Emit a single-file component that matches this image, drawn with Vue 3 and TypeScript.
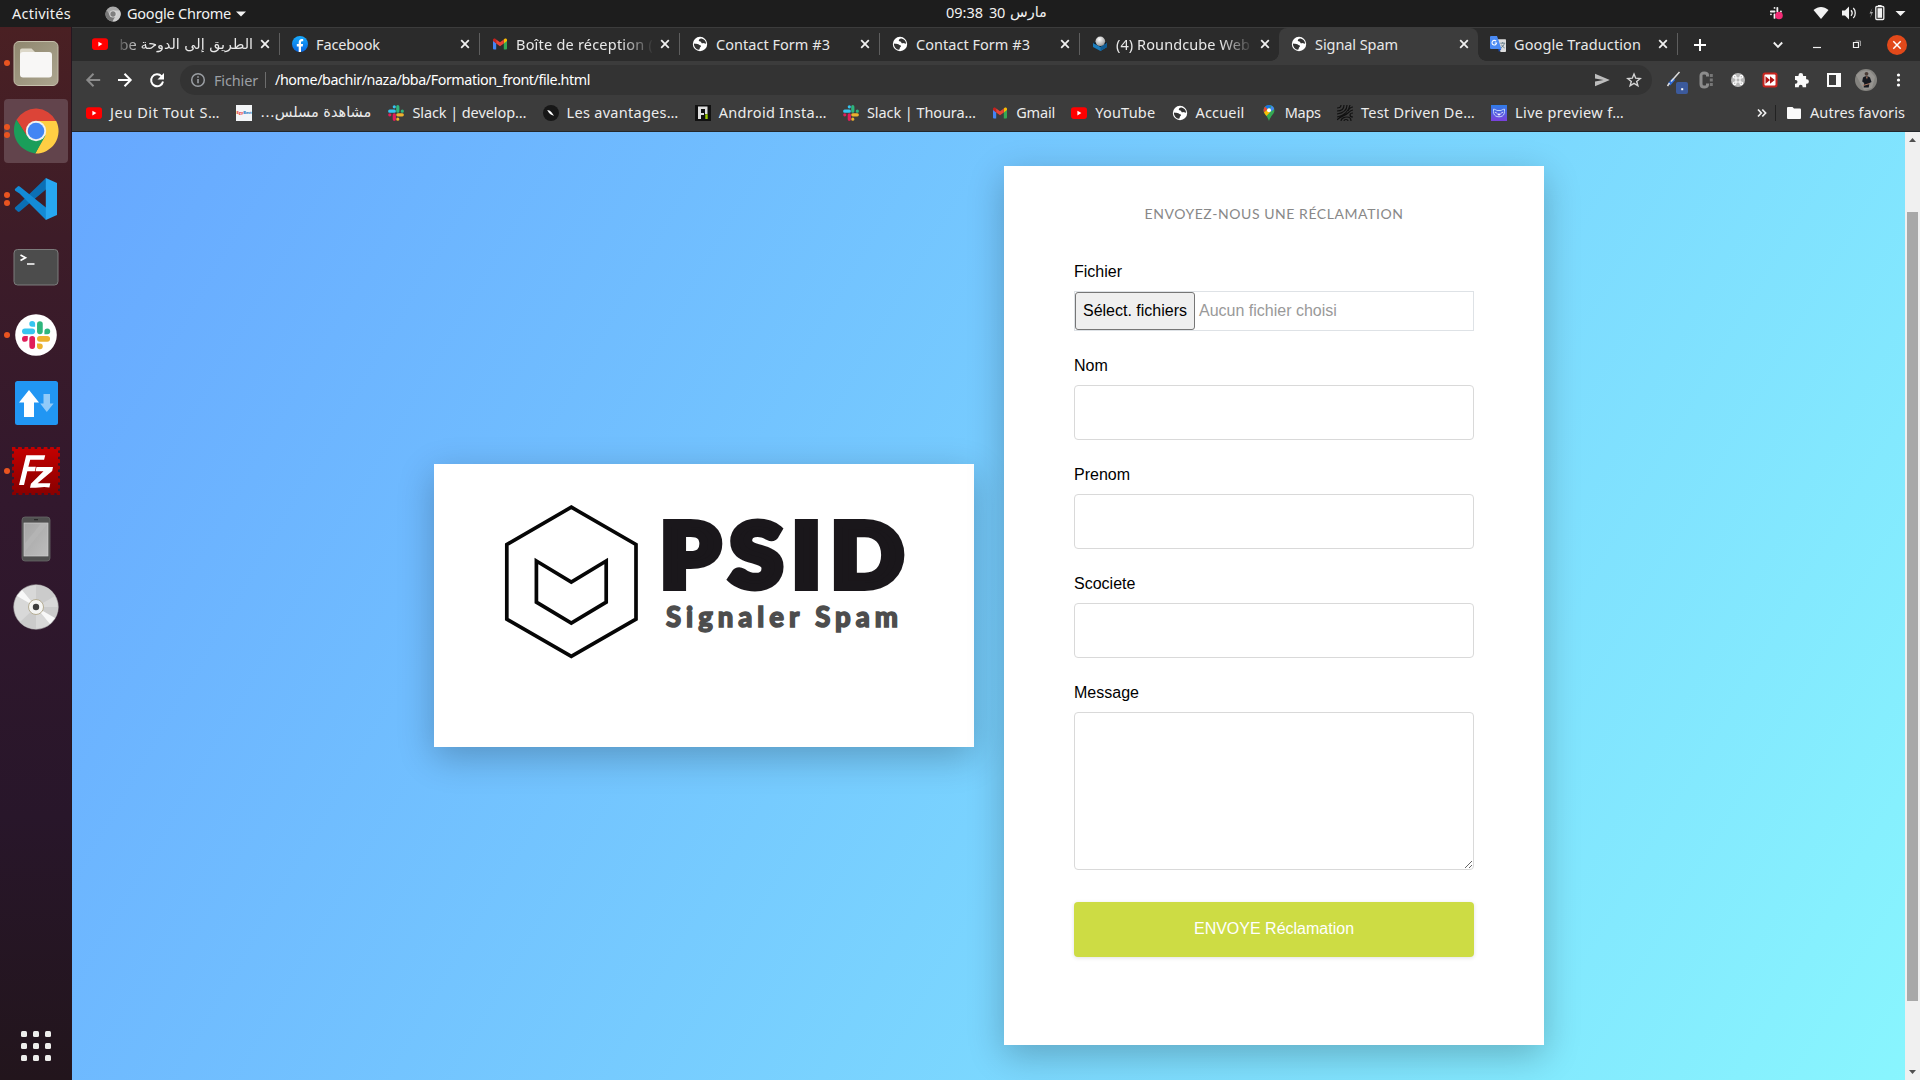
<script setup lang="ts">
import type { Directive } from 'vue'

interface Tab { icon: string; title: string; w: number; active?: boolean; fade?: boolean; rtl?: boolean; sep?: boolean }
interface Bookmark { icon: string; title: string; w: number; rtl?: boolean }
interface DockItem { icon: string; dots: number; active?: boolean }

const tabs: Tab[] = [
  { icon: 'youtube', title: 'الطريق إلى الدوحة', w: 115, rtl: true, fade: true, sep: true },
  { icon: 'facebook', title: 'Facebook', w: 64, sep: true },
  { icon: 'gmail', title: 'Boîte de réception (', w: 137, fade: true, sep: true },
  { icon: 'globe', title: 'Contact Form #3', w: 114, sep: true },
  { icon: 'globe', title: 'Contact Form #3', w: 114, sep: true },
  { icon: 'cube', title: '(4) Roundcube Web', w: 134, fade: true },
  { icon: 'globe', title: 'Signal Spam', w: 83, active: true },
  { icon: 'translate', title: 'Google Traduction', w: 127, sep: true },
]

const bookmarks: Bookmark[] = [
  { icon: 'youtube', title: 'Jeu Dit Tout S…', w: 110 },
  { icon: 'egy', title: 'مشاهدة مسلس…', w: 112, rtl: true },
  { icon: 'slack', title: 'Slack | develop…', w: 114 },
  { icon: 'pen', title: 'Les avantages…', w: 112 },
  { icon: 'android', title: 'Android Insta…', w: 108 },
  { icon: 'slack', title: 'Slack | Thoura…', w: 109 },
  { icon: 'gmail', title: 'Gmail', w: 39 },
  { icon: 'youtube', title: 'YouTube', w: 60 },
  { icon: 'globe', title: 'Accueil', w: 49 },
  { icon: 'maps', title: 'Maps', w: 36 },
  { icon: 'swirl', title: 'Test Driven De…', w: 114 },
  { icon: 'bear', title: 'Live preview f…', w: 109 },
]

const dock: DockItem[] = [
  { icon: 'd-files', dots: 1 },
  { icon: 'd-chrome', dots: 2, active: true },
  { icon: 'd-code', dots: 2 },
  { icon: 'd-term', dots: 0 },
  { icon: 'd-slack', dots: 1 },
  { icon: 'd-transfer', dots: 0 },
  { icon: 'd-fz', dots: 1 },
  { icon: 'd-phone', dots: 0 },
  { icon: 'd-disc', dots: 0 },
]

const fields = ['Nom', 'Prenom', 'Scociete']

/* Spreads the letters of a label so that it fills the given width. */
const vFit: Directive<HTMLElement, number> = {
  mounted(el, binding) {
    const n = (el.textContent || '').trim().length
    if (!binding.value || n < 2) return
    const natural = el.getBoundingClientRect().width
    el.style.letterSpacing = ((binding.value - natural) / n).toFixed(3) + 'px'
  },
}
</script>

<template>
  <div class="desktop">
    <svg class="defs" width="0" height="0" aria-hidden="true">
      <defs>
        <linearGradient id="gFiles" x1="0" y1="0" x2="1" y2="1"><stop offset="0" stop-color="#8f876f" /><stop offset="1" stop-color="#aca58f" /></linearGradient>
        <linearGradient id="gFz" x1="0" y1="0" x2="0" y2="1"><stop offset="0" stop-color="#c20000" /><stop offset="1" stop-color="#8a0000" /></linearGradient>
        <linearGradient id="gBear" x1="0" y1="0" x2="0" y2="1"><stop offset="0" stop-color="#2f7de8" /><stop offset="1" stop-color="#7a40dc" /></linearGradient>
        <linearGradient id="gFb" x1="0" y1="0" x2="0" y2="1"><stop offset="0" stop-color="#18acfe" /><stop offset="1" stop-color="#0866e0" /></linearGradient>
        <linearGradient id="gPhone" x1="0" y1="0" x2="1" y2="1"><stop offset="0" stop-color="#a5a5a5" /><stop offset="1" stop-color="#bdbdbd" /></linearGradient>
        <radialGradient id="gBall" cx=".4" cy=".3" r=".8"><stop offset="0" stop-color="#fff" /><stop offset="1" stop-color="#8b8b8b" /></radialGradient>
      </defs>
      <symbol id="youtube" viewBox="0 0 16 16"><rect y="2.3" width="16" height="11.6" rx="2.8" fill="#f00" /><path d="M6.4 5.7v4.8L10.4 8.1z" fill="#fff" /></symbol>
      <symbol id="facebook" viewBox="0 0 16 16"><circle cx="8" cy="8" r="8" fill="url(#gFb)" /><path d="M6.7 16v-5.6H4.8V8h1.9V6.5c0-2.2 1.2-3.4 3.1-3.4.6 0 1 .1 1.4.2v2h-1c-1 0-1.2.6-1.2 1.3V8h2.1l-.4 2.4H9V16z" fill="#fff" /></symbol>
      <symbol id="gmail" viewBox="0 0 16 16"><path d="M1 4.2v8.3c0 .6.4.9.9.9h2.3V7.2z" fill="#4285f4" /><path d="M15 4.2v8.3c0 .6-.4.9-.9.9h-2.3V7.2z" fill="#34a853" /><path d="M11.8 3.4v4l3.2-2.5V4c0-1.500-1.500-1.900-2.400-1.200z" fill="#fbbc04" /><path d="M1 4v.9l3.200 2.500v-4L3.400 2.800C2.500 2.100 1 2.500 1 4z" fill="#c5221f" /><path d="M4.200 3.400v4L8 10.200l3.800-2.800v-4L8 6.300z" fill="#ea4335" /></symbol>
      <symbol id="globe" viewBox="0 0 16 16"><circle cx="8" cy="8" r="7.200" fill="#fff" /><path d="M9.600 2.500C7 2.700 6.600 4 6.900 5c.9.500 2 .2 2.300 1.200.3 1.200 1.200 1.400 2.200.9 1 .1 1.300.9 2.700.5-.2-2.600-1.900-4.500-4.500-5.100z" fill="#333" /><path d="M1.900 7.500c1.600.3 3 .1 4.500.8 1 .5 1.200 1.100 2.300 1.300.8.400.2 1.300-.5 1.600-.7.500-.2 1.700-1.200 2.600-3-.3-5.200-3-5.100-6.300z" fill="#333" /></symbol>
      <symbol id="cube" viewBox="0 0 16 16"><path d="M1 7l7-3 7 3v4l-6.500 4L1 11z" fill="#1b7dbd" /><path d="M1 7l7.500 4L15 7l-6-4z" fill="#111a22" /><path d="M8.500 11l6.500-4v4l-6.500 4z" fill="#105b93" /><circle cx="8.300" cy="5.300" r="4.800" fill="url(#gBall)" /></symbol>
      <symbol id="translate" viewBox="0 0 16 16"><path d="M7 3.200h8c.6 0 1 .4 1 1V15c0 .5-.4 1-1 1H10.500z" fill="#dedede" /><path d="M10.300 7.200h4.900M12.700 6v1.200M14.300 7.400c-.5 2-1.700 3.300-3.300 4.300M11.500 8.700c.7 1.500 1.700 2.500 3.200 3.300" stroke="#607988" stroke-width=".9" fill="none" /><path d="M8.300 13h3l-2.400 3z" fill="#1a4fc0" /><path d="M1 0h6l4.500 13H1a1 1 0 0 1-1-1V1a1 1 0 0 1 1-1z" fill="#4a8af4" /><path d="M6.100 5.200A2.300 2.300 0 1 0 6.600 7H4.700" stroke="#fff" stroke-width="1.100" fill="none" /></symbol>
      <symbol id="slack" viewBox="0 0 16 16"><g stroke-width="3.200" stroke-linecap="round"><path d="M6.300 6.200H1.700M6.300 1.800v.01" stroke="#36c5f0" /><path d="M9.800 6.200V1.700M14.300 6.200h-.01" stroke="#2eb67d" /><path d="M9.800 9.800h4.500M9.800 14.200v.01" stroke="#ecb22e" /><path d="M6.300 9.800v4.500M1.800 9.800h.01" stroke="#e01e5a" /></g></symbol>
      <symbol id="pen" viewBox="0 0 16 16"><circle cx="8" cy="8" r="8" fill="#171717" /><path d="M4.200 4.900c2.900.2 4.200 1.700 6.900 5.800-3.200-.8-5.200-2.100-6.900-5.800z" fill="#fff" /></symbol>
      <symbol id="android" viewBox="0 0 16 16"><rect width="16" height="16" fill="#111" /><path d="M3 14V1.500h9.500V9H10V4H6v4h3v2H6v4z" fill="#dedede" /><path d="M10.300 9.200h2.400V14h-2.400z" fill="#9aca00" /></symbol>
      <symbol id="maps" viewBox="0 0 16 16"><path d="M8 0C5 0 2.600 2.300 2.600 5.300c0 4 4 5.500 5.400 10.700 1.400-5.200 5.400-6.700 5.400-10.700C13.400 2.300 11 0 8 0z" fill="#34a853" /><path d="M8 0C6.400 0 5 .7 4 1.800l2.600 2.500 4-3.700C9.800.2 8.900 0 8 0z" fill="#1a73e8" /><path d="M4 1.800C2.600 3.400 2.200 5.600 3 7.500l3.600-3.200z" fill="#ea4335" /><path d="M3 7.500c.6 1.400 1.600 2.400 2.500 3.600L9.600 6.500 6.600 4.300z" fill="#fbbc04" /><path d="M10.600.6L9.300 3.800l1 2.600L13.200 4A5.400 5.400 0 0 0 10.600.6z" fill="#4285f4" /><circle cx="8" cy="5.300" r="2" fill="#fff" /></symbol>
      <symbol id="swirl" viewBox="0 0 16 16"><g fill="none" stroke="#111" stroke-width="1.200"><path d="M0 3C3 3 4 2 4 0M0 6C5 6 7 4 7 0M0 9C7 8 10 5 10 0M0 12C7 11 12 6 13 0M0 15C3 11 8 11 11 8s4-3 5-3M4 16c0-3 4-4 6-4s4 1 4 4M7 16c0-2 4-2 4 0M16 8c-4 0-4 4 0 4M16 2c-2 0-4 2-5 4" /></g></symbol>
      <symbol id="bear" viewBox="0 0 16 16"><rect width="16" height="16" fill="url(#gBear)" /><path d="M2.500 4.200c2 0 2.500 1 3.600 1.300h3.800c1.100-.3 1.600-1.300 3.600-1.300-.2 1.800.2 2.800-.3 4.300-.5 2-2.400 3.300-5.200 3.300s-4.700-1.300-5.200-3.300c-.5-1.500-.1-2.500-.3-4.300z" fill="none" stroke="#cfe2ff" stroke-width=".9" /><path d="M4 7.200l2 1M12 7.200l-2 1M6.500 9h3L8 10.300z" fill="#fff" stroke="#fff" stroke-width=".7" /></symbol>

      <symbol id="d-files" viewBox="0 0 48 48"><rect x="2" y="2.500" width="44" height="44" rx="5" fill="url(#gFiles)" stroke="#c6c0ac" stroke-width="1" /><path d="M8 15v-3.500a2 2 0 0 1 2-2h9.500l4 4H38V20H8z" fill="#dcd7c8" /><rect x="8" y="13" width="32" height="25.500" rx="3" fill="#f8f7f6" /></symbol>
      <symbol id="d-chrome" viewBox="0 0 48 48"><path d="M24 14h20.200A22.500 22.500 0 0 1 23.300 46.500L33 28z" fill="#ffce44" /><path d="M4.500 12.700l10.700 16.900L24 14h20A22.500 22.500 0 0 0 4.500 12.700z" fill="#dc4437" /><path d="M4.500 12.700C-1 22 1 42 23.300 46.500L33.500 28.600 15 29z" fill="#1a9e5a" /><circle cx="24" cy="24" r="10.200" fill="#f1f1f1" /><circle cx="24" cy="24" r="8.300" fill="#4285f4" /></symbol>
      <symbol id="d-code" viewBox="0 0 48 48"><path d="M34 3L7.500 28.500 3.200 32.200a1.500 1.500 0 0 0 0 2l2.500 2.300a1.500 1.500 0 0 0 2 0L34.500 14z" fill="#0b6fb5" /><path d="M34 45L7.500 18.500 3.200 15.800a1.500 1.500 0 0 1 0-2l2.500-2.300a1.500 1.500 0 0 1 2 0L34.500 33z" fill="#138bd6" /><path d="M33.800 3L45 8v32l-11.200 5z" fill="#27a7f1" /></symbol>
      <symbol id="d-term" viewBox="0 0 48 48"><rect x="2" y="6.500" width="44" height="35.500" rx="3.500" fill="#4c4c4c" stroke="#7c7c7c" stroke-width="1" /><path d="M8.500 12l5 2.800-5 2.800M15 21h7.500" fill="none" stroke="#fff" stroke-width="1.700" /></symbol>
      <symbol id="d-slack" viewBox="0 0 48 48"><circle cx="24" cy="24" r="20.800" fill="#fff" /><g stroke-width="5.700" stroke-linecap="round"><path d="M20.200 20.300h-7.300" stroke="#36c5f0" /><path d="M27.900 20.300V13" stroke="#2eb67d" /><path d="M27.900 27.800h7.300" stroke="#ecb22e" /><path d="M20.200 27.800v7.300" stroke="#e01e5a" /></g><path d="M23.100 15.800h-3a2.900 2.900 0 1 1 3-3z" fill="#36c5f0" /><path d="M32.400 23.200v-3a2.900 2.900 0 1 1 3 3z" fill="#2eb67d" /><path d="M25 32.400h3a2.900 2.900 0 1 1-3 3z" fill="#ecb22e" /><path d="M15.800 25v3a2.900 2.900 0 1 1-3-3z" fill="#e01e5a" /></symbol>
      <symbol id="d-transfer" viewBox="0 0 48 48"><rect x="3" y="2" width="43" height="44" rx="2.500" fill="#2196f3" /><path d="M17 11L27 23.500h-5V38H12V23.500H7z" fill="#fff" /><path d="M34.800 33L28.200 24.500h3.300V15H38v9.500h3.600z" fill="#90caf9" /></symbol>
      <symbol id="d-fz" viewBox="0 0 48 48"><rect x="2" y="2" width="44" height="44" fill="url(#gFz)" /><rect x="1.500" y="1.500" width="45" height="45" fill="none" stroke="url(#gFz)" stroke-width="4" stroke-linecap="round" stroke-dasharray=".1 6.300" /><path d="M14.200 8.200h19l-1.100 4.600H18.200l-1.800 7h7.500l-1.100 4.400h-7.500L12 38H7zM24.500 20H41l-.8 4L25.600 36.300h12.700l-.9 4.200c-7-1.600-10 .5-19.400.2l.9-4L31.500 24.200h-8z" fill="#fff" /></symbol>
      <symbol id="d-phone" viewBox="0 0 48 48"><rect x="10" y="2" width="28" height="44" rx="3" fill="#505050" stroke="#686868" stroke-width=".8" /><rect x="12" y="8" width="24" height="33" fill="url(#gPhone)" stroke="#cecece" stroke-width=".7" /><path d="M12.500 29L29 8.400h6.600L12.500 37z" fill="#b6b6b6" opacity=".7" /><rect x="22" y="4.200" width="4" height="1" fill="#222" /></symbol>
      <symbol id="d-disc" viewBox="0 0 48 48"><circle cx="24" cy="24" r="22.300" fill="#d8d8d8" stroke="#a9a9a9" stroke-width=".6" /><path d="M24 24V2A22 22 0 0 1 43 13zM24 24h22a22 22 0 0 1-4 12zM24 24v22A22 22 0 0 1 8 39z" fill="#cbcbcb" /><path d="M24 24L5 13l5-6zM24 24l19 11-5 6z" fill="#f8f8f8" /><circle cx="24" cy="24" r="7.500" fill="#f5f5f3" stroke="#b5ad94" stroke-width="1" /><circle cx="24" cy="24" r="3.200" fill="#3e3e3e" /></symbol>
    </svg>

    <header class="topbar">
      <span v-fit="59" class="activities">Activités</span>
      <svg class="mini-chrome" width="16" height="16" viewBox="0 0 16 16"><circle cx="8" cy="8" r="7.600" fill="#a9a9a9" /><path d="M1.600 4A7.600 7.600 0 0 0 7.500 15.600L10 10 5 9.500z" fill="#777" /><path d="M8 4.600h6.900A7.600 7.600 0 0 1 7.600 15.600L11 9.700z" fill="#cfcfcf" /><circle cx="8" cy="8" r="3.600" fill="#ddd" /><circle cx="8" cy="8" r="2.700" fill="#808080" /></svg>
      <span v-fit="104" class="app-name">Google Chrome</span>
      <svg class="app-tri" width="10" height="6" viewBox="0 0 10 6"><path d="M0 .5h10L5 5.500z" fill="#f2f2f2" /></svg>
      <div class="clock"><span v-fit="37">09:38</span><span v-fit="16">30</span><span class="month" dir="rtl">مارس</span></div>
      <svg class="tray" width="140" height="20" viewBox="0 0 140 20">
        <g transform="translate(.5 3.500) scale(.8)" stroke="#f2f2f2" stroke-width="2.300" stroke-linecap="round"><path d="M6.300 6.200H1.700M6.300 1.800v.01M9.800 6.200V1.700M14.300 6.200h-.01M6.300 9.800v4.500M1.800 9.800h.01" /></g>
        <circle cx="10" cy="12.500" r="3.800" fill="#f32b75" />
        <path d="M44.500 7c5-4 10-4 15 0L52 16z" fill="#f2f2f2" />
        <path d="M73 7.500h3l4-4v13l-4-4h-3z" fill="#f2f2f2" /><path d="M82 7.300c1.300 1.500 1.300 3.900 0 5.400M84.300 5c2.600 2.500 2.600 7.500 0 10" fill="none" stroke="#f2f2f2" stroke-width="1.300" />
        <path d="M103.500 5l-3 5.500h2L101 15l3-6h-2z" fill="#aaa" /><rect x="106.800" y="3.500" width="8" height="13" rx="1" fill="none" stroke="#f2f2f2" stroke-width="1.300" /><rect x="109" y="2" width="3.600" height="1.500" fill="#f2f2f2" /><rect x="108.500" y="5.200" width="4.600" height="9.600" fill="#f2f2f2" />
        <path d="M126.500 8h10l-5 5z" fill="#f2f2f2" />
      </svg>
    </header>

    <div class="workspace">
      <aside class="dock">
        <div v-for="d in dock" :key="d.icon" class="dock-slot" :class="{ active: d.active }">
          <div class="dots"><i v-for="k in d.dots" :key="k"></i></div>
          <svg width="48" height="48"><use :href="'#' + d.icon" /></svg>
        </div>
        <div class="apps"><i v-for="k in 9" :key="k"></i></div>
      </aside>

      <main class="window">
        <div class="tabstrip">
          <div v-for="(t, i) in tabs" :key="i" class="tab" :class="{ active: t.active, sep: t.sep }">
            <svg class="fav" width="16" height="16"><use :href="'#' + t.icon" /></svg>
            <span v-if="t.rtl" class="tab-title start-fade"><span>be</span><span class="arabic" dir="rtl">{{ t.title }}</span></span>
            <span v-else class="tab-title" :class="{ 'end-fade': t.fade }"><span v-fit="t.w">{{ t.title }}</span></span>
            <svg class="x" width="10" height="10" viewBox="0 0 10 10"><path d="M1.200 1.200l7.600 7.600M8.800 1.200L1.200 8.800" stroke="#f0f0f0" stroke-width="1.800" /></svg>
          </div>
          <svg class="plus" width="14" height="14" viewBox="0 0 14 14"><path d="M7 1v12M1 7h12" stroke="#fff" stroke-width="2" /></svg>
          <div class="wm">
            <svg width="117" height="20" viewBox="0 0 117 20"><path d="M3.800 7.500L8 11.800l4.200-4.300" fill="none" stroke="#f0f0f0" stroke-width="1.900" /><path d="M43 12.500h8" stroke="#f0f0f0" stroke-width="1.200" /><path d="M83.500 7.500h5v5h-5z" fill="none" stroke="#f0f0f0" stroke-width="1.200" /><path d="M85.500 6h5v5" fill="none" stroke="#999" stroke-width="1" /></svg>
            <svg width="20" height="20" viewBox="0 0 20 20"><circle cx="10" cy="10" r="10" fill="#e2491a" /><path d="M6.300 6.300l7.400 7.400M13.700 6.300l-7.400 7.400" stroke="#fff" stroke-width="1.500" /></svg>
          </div>
        </div>

        <div class="toolbar">
          <svg class="nav" width="90" height="20" viewBox="0 0 90 20"><g fill="none" stroke-width="2"><path d="M16.200 10H4M9.500 3.800L3.300 10l6.200 6.200" stroke="#8a8a8a" /><path d="M34 10h12.300M40.500 3.800l6.200 6.200-6.200 6.200" stroke="#fff" /><path d="M77.600 6.300A6 6 0 1 0 79 11.500" stroke="#fff" /></g><path d="M80 3v6.500h-6.500z" fill="#fff" /></svg>
          <div class="omnibox">
            <svg width="16" height="16" viewBox="0 0 16 16"><circle cx="8" cy="8" r="6.300" fill="none" stroke="#9b9fa4" stroke-width="1.500" /><path d="M8 7v4.200M8 4.200v1.600" stroke="#9b9fa4" stroke-width="1.600" /></svg>
            <span v-fit="44" class="scheme">Fichier</span><i class="bar"></i>
            <span v-fit="315" class="url">/home/bachir/naza/bba/Formation_front/file.html</span>
            <svg class="send" width="60" height="20" viewBox="0 0 60 20"><path d="M4 3.800L18.800 10 4 16.200v-4.700L12.500 10 4 8.500z" fill="#bdbdbd" /><path d="M43 4l1.700 4.200 4.500.3-3.500 2.900 1.200 4.400L43 13.400l-3.900 2.400 1.200-4.400-3.500-2.900 4.500-.3z" fill="none" stroke="#d5d5d5" stroke-width="1.400" /></svg>
          </div>
          <svg class="ext" width="250" height="30" viewBox="0 0 250 30">
            <path d="M9 19.500l5-5.500" stroke="#2c6adb" stroke-width="3.200" /><path d="M7.500 21l2-3M11 16.500l8.500-9.500" stroke="#ddd" stroke-width="1.500" /><rect x="16" y="17" width="12" height="12" rx="2" fill="#3c5a9c" /><rect x="21.200" y="23.200" width="2" height="2" fill="#fff" />
            <path d="M47.500 11.500V10q0-2-3.300-2T41 11v8q0 3 3.200 3t3.300-2v-1.500" fill="none" stroke="#8c8c8c" stroke-width="3" /><path d="M51.300 9v3M51.300 13.500v3M51.300 18v3" stroke="#777" stroke-width="3" />
            <circle cx="78" cy="15" r="7" fill="#b6b6b6" /><path d="M76 13h4v4h-4zM76 13v-1.300A1.300 1.300 0 1 0 74.700 13zM80 13v-1.300A1.300 1.300 0 1 1 81.300 13zM76 17v1.300A1.300 1.300 0 1 1 74.700 17zM80 17v1.300A1.300 1.300 0 1 0 81.300 17z" fill="none" stroke="#fff" stroke-width="1.100" />
            <rect x="102.500" y="7.500" width="15" height="15" rx="2.500" fill="#c8251f" /><rect x="104.500" y="9.500" width="11" height="11" rx="1" fill="#fff" /><path d="M105.500 11.200l4.500 3.800-4.500 3.800zM110 11.200l4.700 3.800-4.700 3.800z" fill="#b01515" />
            <path d="M135 11h3.500v-.8a2.300 2.300 0 1 1 4.600 0v.8h3v3.300h.6a2.200 2.200 0 1 1 0 4.400h-.6v3.500h-3.500v-.6a1.900 1.900 0 0 0-3.800 0v.6H135v-3.500h.6a1.900 1.900 0 0 0 0-3.800h-.6z" fill="#fafafa" />
            <rect x="168" y="9" width="12" height="12" fill="none" stroke="#fafafa" stroke-width="2" /><rect x="176" y="9" width="5" height="12" fill="#fafafa" />
            <circle cx="206" cy="15" r="11" fill="#84837f" /><path d="M196 10q6-6 14-4l5 6-3 11-8 2z" fill="#969490" /><circle cx="206.500" cy="8.800" r="1.900" fill="#4a3c36" /><path d="M203 12.500q3.500-3 7 0l1.500 4.500-2 1-.8 4.500h-5l.5-4.500-2-1.500z" fill="#15181f" /><path d="M205.800 11.500h2l-.8 3z" fill="#a87863" /><path d="M203 20.500l7-2" stroke="#a87863" stroke-width="1.300" />
            <g fill="#fff"><circle cx="238.500" cy="10" r="1.600" /><circle cx="238.500" cy="15" r="1.600" /><circle cx="238.500" cy="20" r="1.600" /></g>
          </svg>
        </div>

        <nav class="bookmarks">
          <div v-for="(b, i) in bookmarks" :key="i" class="bm" :style="{ width: b.w + 24 + 'px' }">
            <svg v-if="b.icon === 'egy'" width="16" height="16" viewBox="0 0 16 16"><rect width="16" height="16" fill="#f3f5f7" /><text x=".5" y="9.400" font-size="4.200" font-weight="900" font-family="Lato, sans-serif" textLength="15"><tspan fill="#e8332a">Egy</tspan><tspan fill="#2277bf">Best</tspan></text></svg>
            <svg v-else width="16" height="16"><use :href="'#' + b.icon" /></svg>
            <span v-if="b.rtl" class="arabic bm-ar" dir="rtl">{{ b.title }}</span>
            <span v-else v-fit="b.w">{{ b.title }}</span>
          </div>
          <div class="bm-right">
            <svg width="10" height="10" viewBox="0 0 10 10"><path d="M1 1.500L4.300 5 1 8.500M5.300 1.500L8.600 5 5.300 8.500" fill="none" stroke="#f0f0f0" stroke-width="1.700" /></svg>
            <i></i>
            <svg width="14" height="12" viewBox="0 0 14 12"><path d="M1.200 0h4.300L7 1.500h5.800c.7 0 1.200.5 1.200 1.200v8c0 .7-.5 1.300-1.200 1.300H1.200C.5 12 0 11.400 0 10.700V1.200C0 .5.5 0 1.200 0z" fill="#fafafa" /></svg>
            <span v-fit="95">Autres favoris</span>
          </div>
        </nav>

        <div class="viewport">
          <section class="page">
            <div class="card logo-card">
              <svg class="logo" width="420" height="170" viewBox="0 0 420 170" role="img" aria-label="PSID">
                <g fill="none" stroke="#060606" stroke-width="3.700">
                  <path d="M77.300 13.200L142 50.500v74.700l-64.700 37.200L12.800 125.200V50.500z" />
                  <path d="M42.400 67l34.900 21 34.900-21v41.200L77.300 129l-34.900-20.800z" />
                </g>
                <text class="psid" transform="scale(1.080 1)" x="154 218.500 276 312" y="93.200">PSID</text>
                <text class="signaler" x="172" y="132.500" textLength="232">Signaler Spam</text>
              </svg>
            </div>
            <form class="card form-card" @submit.prevent>
              <h1><span v-fit="259">ENVOYEZ-NOUS UNE RÉCLAMATION</span></h1>
              <div class="group">
                <label>Fichier</label>
                <div class="file"><button type="button">Sélect. fichiers</button><span>Aucun fichier choisi</span></div>
              </div>
              <div v-for="f in fields" :key="f" class="group">
                <label>{{ f }}</label>
                <input type="text" />
              </div>
              <div class="group message">
                <label>Message</label>
                <textarea></textarea>
              </div>
              <button class="submit" type="submit">ENVOYE Réclamation</button>
            </form>
          </section>
          <div class="scrollbar">
            <svg width="15" height="15" viewBox="0 0 15 15"><path d="M4 10h7L7.500 6z" fill="#505050" /></svg>
            <div class="track"><div class="thumb"></div></div>
            <svg width="15" height="15" viewBox="0 0 15 15"><path d="M4 5h7L7.500 9z" fill="#505050" /></svg>
          </div>
        </div>
      </main>
    </div>
  </div>
</template>

<style>
html, body { margin: 0; background: #1d1d1d; overflow: hidden; }
</style>

<style scoped>
.desktop { width: 1920px; height: 1080px; overflow: hidden; display: flex; flex-direction: column; font-family: "Noto Sans", "DejaVu Sans", sans-serif; font-size: 14.500px; color: #f0f0f0; white-space: nowrap; }
.desktop svg { display: block; flex: none; }
.desktop .defs { position: absolute; }
.arabic, .month { font-family: "DejaVu Sans", sans-serif; }

.topbar { height: 27px; flex: none; background: #1d1d1d; display: flex; align-items: center; position: relative; padding-left: 12px; line-height: 27px; color: #f2f2f2; }
.mini-chrome { margin-left: 34px; }
.app-name { margin-left: 6px; }
.app-tri { margin-left: 5px; }
.clock { position: absolute; left: 946px; top: -1px; display: flex; }
.clock span:nth-child(2) { margin-left: 6px; }
.month { margin-left: 5px; font-size: 14.500px; }
.tray { position: absolute; left: 1769px; top: 3px; }

.workspace { flex: 1; display: flex; min-height: 0; }
.dock { width: 72px; box-sizing: border-box; flex: none; border-right: 1px solid #251620; background: linear-gradient(180deg, #4a2023 0%, #3d1c28 20%, #32182d 45%, #28162a 75%, #22151c 100%); padding-top: 4px; display: flex; flex-direction: column; }
.dock-slot { width: 64px; height: 64px; margin: 0 0 4px 4px; border-radius: 4px; display: flex; align-items: center; }
.dock-slot.active { background: #62444c; }
.dots { width: 8px; display: flex; flex-direction: column; align-items: flex-start; gap: 2px; }
.dots i { width: 6px; height: 6px; border-radius: 50%; background: #e95420; }
.apps { margin: auto 0 19px 21px; display: grid; grid-template-columns: repeat(3, 6px); gap: 6px; }
.apps i { height: 6px; border-radius: 1.500px; background: #eeeeec; }

.window { flex: 1; display: flex; flex-direction: column; min-width: 0; }
.tabstrip { height: 34px; box-sizing: border-box; border-top: 1px solid #3c3c3c; background: #2b2b2b; display: flex; padding-left: 8px; }
.tab { width: 200px; box-sizing: border-box; padding: 0 0 1px 12px; display: flex; align-items: center; border-right: 1px solid transparent; background-clip: padding-box; }
.tab.sep { border-image: linear-gradient(transparent 18%, #5e5e5e 18%, #5e5e5e 80%, transparent 80%) 1; border-width: 0 1px 0 0; border-style: solid; }
.tab.active { background: #3c3c3c; border: 0; border-radius: 8px 8px 0 0; position: relative; width: 199px; margin-left: -1px; }
.tab.active::before, .tab.active::after { content: ""; position: absolute; bottom: 0; width: 8px; height: 8px; }
.tab.active::before { left: -8px; background: radial-gradient(circle at 0 0, transparent 7.500px, #3c3c3c 8px); }
.tab.active::after { right: -8px; background: radial-gradient(circle at 100% 0, transparent 7.500px, #3c3c3c 8px); }
.tab-title { width: 136px; margin-left: 8px; overflow: hidden; line-height: 24px; color: #e8e8e8; display: flex; }
.start-fade { justify-content: flex-end; gap: 4px; width: 134px; margin-left: 11px; margin-right: -1px; direction: ltr; -webkit-mask-image: linear-gradient(90deg, rgba(0,0,0,.2), #000 22px); mask-image: linear-gradient(90deg, rgba(0,0,0,.2), #000 22px); }
.start-fade .arabic { font-size: 14.300px; }
.end-fade { -webkit-mask-image: linear-gradient(90deg, #000 105px, transparent 138px); mask-image: linear-gradient(90deg, #000 105px, transparent 138px); }
.x { margin-left: 7.500px; }
.plus { align-self: center; margin-left: 15px; }
.wm { margin-left: auto; margin-right: 13px; align-self: center; display: flex; }

.toolbar { height: 37px; padding-bottom: 1px; background: #3c3c3c; display: flex; align-items: center; }
.nav { margin-left: 12px; width: 90px; margin-right: 6px; }
.omnibox { width: 1472px; height: 30px; box-sizing: border-box; border-radius: 15px; background: #333; display: flex; align-items: center; padding-left: 10px; }
.scheme { color: #9b9fa4; margin-left: 8px; }
.bar { width: 1px; height: 16px; background: #6d6d6d; margin: 0 9px 0 7px; }
.url { color: #fff; font-size: 14.300px; }
.send { margin-left: auto; margin-right: 1px; }
.ext { margin-left: 8px; }

.bookmarks { height: 33px; box-sizing: border-box; background: #3c3c3c; border-bottom: 1px solid #23272b; display: flex; align-items: center; gap: 16.200px; padding: 0 15px 4px 14px; line-height: 22px; color: #ececec; }
.bm { display: flex; align-items: center; gap: 8px; flex: none; }
.bm span, .bm-right span { height: 24px; }
.bm-ar { font-size: 14.500px; }
.bm-right { margin-left: auto; display: flex; align-items: center; }
.bm-right i { width: 1px; height: 16px; background: #222; margin: 0 11px 0 8px; }
.bm-right span { margin-left: 9px; }

.viewport { flex: 1; display: flex; min-height: 0; }
.page { flex: 1; display: flex; align-items: flex-start; justify-content: center; gap: 30px; background: linear-gradient(-60deg, #89f7fe 0%, #66a6ff 100%) 0 -78px / 1833px 1103px no-repeat; padding: 34px 0 0 1px; overflow: hidden; box-sizing: border-box; }
.card { width: 540px; box-sizing: border-box; background: #fff; box-shadow: 0 10px 34px 0 rgba(0,0,0,.24); flex: none; }
.logo-card { height: 283px; margin-top: 298px; padding: 30px 60px; }
.form-card { height: 879px; padding: 0 70px; font-family: "Liberation Sans", Arial, sans-serif; font-size: 16px; color: #000; }
.psid { font: 900 88px Lato, sans-serif; fill: #1a171b; stroke: #1a171b; stroke-width: 8px; }
.signaler { font: 900 27.500px Lato, sans-serif; fill: #4d4d4d; stroke: #4d4d4d; stroke-width: 1.400px; }
h1 { margin: 36px 0 33px; height: 24px; text-align: center; font: 400 14px/24px Lato, sans-serif; color: #888; }
.group { margin-bottom: 22px; }
.message { margin-bottom: 32px; }
label { display: block; height: 24px; line-height: 26px; margin-bottom: 8px; }
.file { height: 40px; box-sizing: border-box; border: 1px solid #dee2e6; display: flex; color: #999; }
.file button { width: 120px; height: 38px; box-sizing: border-box; padding: 0; border: 1px solid #767676; border-radius: 3px; background: #efefef; font: 16px "Liberation Sans", Arial, sans-serif; color: #000; }
.file span { margin-left: 4px; line-height: 38px; }
input, textarea { display: block; width: 400px; height: 55px; box-sizing: border-box; border: 1px solid #d9d9d9; border-radius: 4px; background: #fff; outline: 0; margin: 0; }
textarea { height: 158px; resize: vertical; }
.submit { display: block; width: 400px; height: 55px; border: 0; border-radius: 4px; background: #cddc44; color: #fff; font: 16px "Liberation Sans", Arial, sans-serif; padding: 0 0 1px; box-shadow: 0 1px 4px rgba(0,0,0,.12); }

.scrollbar { width: 15px; background: #f0f0f0; display: flex; flex-direction: column; }
.track { flex: 1; padding-top: 65px; }
.thumb { width: 11px; height: 789px; margin-left: 2px; background: #a8a8a8; }
</style>
